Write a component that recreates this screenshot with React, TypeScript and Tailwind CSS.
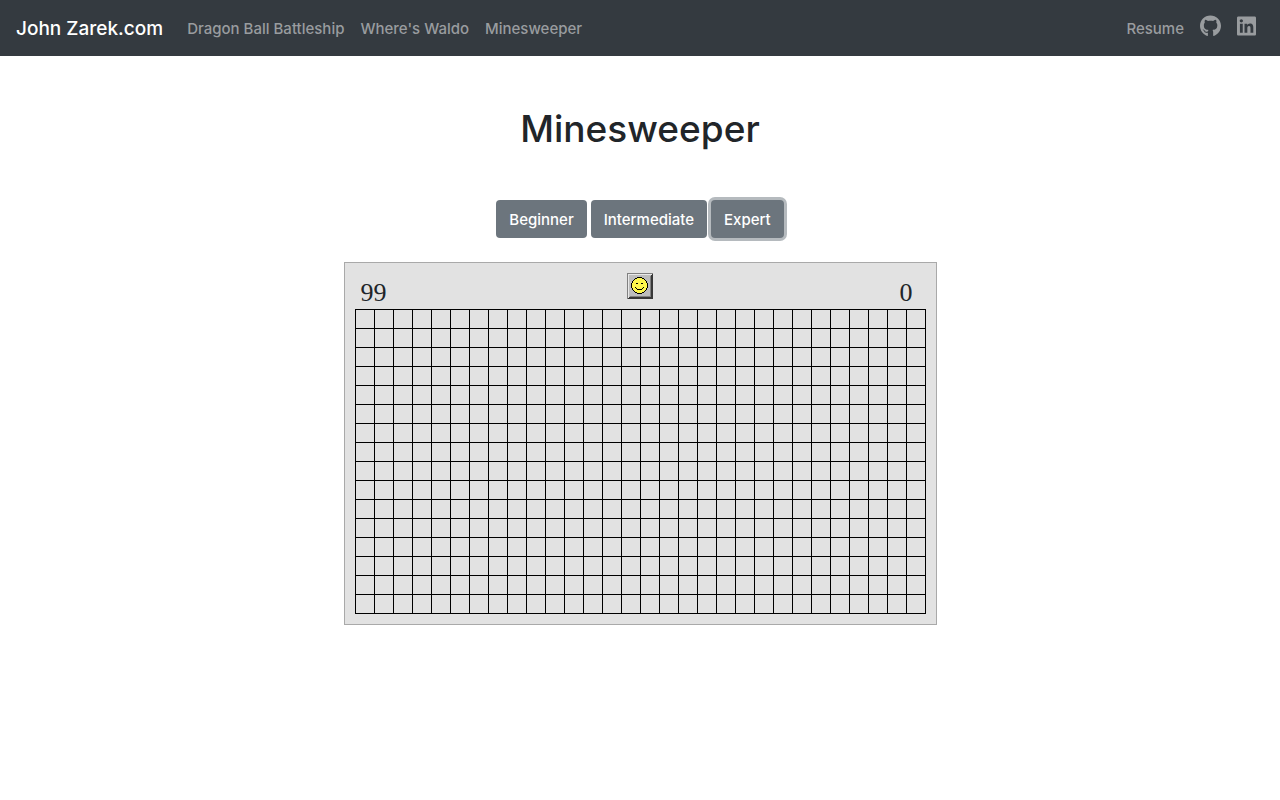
import { useEffect, useState } from "react";
import { FaGithub, FaLinkedin } from "react-icons/fa";

type Level = { name: string; columns: number; rows: number; mines: number };

const levels: Level[] = [
  { name: "Beginner", columns: 9, rows: 9, mines: 10 },
  { name: "Intermediate", columns: 16, rows: 16, mines: 40 },
  { name: "Expert", columns: 30, rows: 16, mines: 99 },
];

const games = ["Dragon Ball Battleship", "Where's Waldo", "Minesweeper"];

function Navbar() {
  return (
    <nav className="flex min-h-14 items-center bg-[#343a40] px-4 text-[15px] leading-6 font-medium text-[#999c9f]">
      <a href="#home" className="mr-4 pt-0.5 text-[19px] text-white">
        John Zarek.com
      </a>
      <ul className="flex items-center">
        {games.map((game) => (
          <li key={game}>
            <a href="#game" className="block px-2 pt-2.5 pb-2 hover:text-white">
              {game}
            </a>
          </li>
        ))}
      </ul>
      <ul className="ml-auto flex items-center">
        <li>
          <a href="#resume" className="block px-2 pt-2.5 pb-2 hover:text-white">
            Resume
          </a>
        </li>
        <li>
          <a href="#github" aria-label="GitHub" className="block px-2 pb-1 hover:text-white">
            <FaGithub className="h-[22px] w-[21px]" />
          </a>
        </li>
        <li>
          <a href="#linkedin" aria-label="LinkedIn" className="block px-2 pb-1 hover:text-white">
            <FaLinkedin className="h-[22px] w-[19px]" />
          </a>
        </li>
      </ul>
    </nav>
  );
}

function Smiley() {
  return (
    <svg viewBox="0 0 26 26" className="size-[26px]" shapeRendering="crispEdges" aria-hidden="true">
      <path fill="#808080" d="M0 0h26v26H0z" />
      <path fill="#e8e8e8" d="M1 1h24v24H1z" />
      <path fill="#383838" d="M25 1h1v25H1v-1h24zM24 2h1v23H2v-1h22z" />
      <path fill="#bdbdbd" d="M2 2h22v22H2z" />
      <path fill="#808080" d="M23 3h1v21H3v-1h20z" />
      <path
        fill="#fdf74c"
        d="M10 4h5v1h2v1h1v1h1v1h1v2h1v5h-1v2h-1v1h-1v1h-1v1h-2v1h-5v-1H8v-1H7v-1H6v-1H5v-2H4v-5h1V8h1V7h1V6h1V5h2z"
      />
      <path
        fill="#000"
        d="M10 4h5v1h-5zM8 5h2v1H8zM15 5h2v1h-2zM7 6h1v1H7zM17 6h1v1h-1zM6 7h1v1H6zM18 7h1v1h-1zM5 8h1v2H5zM19 8h1v2h-1zM4 10h1v5H4zM20 10h1v5h-1zM5 15h1v2H5zM19 15h1v2h-1zM6 17h1v1H6zM18 17h1v1h-1zM7 18h1v1H7zM17 18h1v1h-1zM8 19h2v1H8zM15 19h2v1h-2zM10 20h5v1h-5zM9 10h2v1H9zM14 10h2v1h-2zM8 14h1v1H8zM16 14h1v1h-1zM9 15h1v1H9zM15 15h1v1h-1zM10 16h5v1h-5z"
      />
    </svg>
  );
}

function Board({ level }: { level: Level }) {
  const cells = Array.from({ length: level.rows * level.columns }, (_, i) => i);
  return (
    <div className="mt-6 border border-[#a9a9a9] bg-[#e2e2e2] p-2.5">
      <div className="grid h-9 grid-cols-3 px-1.5 font-['Liberation_Serif',serif] text-[26px] leading-9 text-[#212529]">
        <span className="pt-0.5">{level.mines}</span>
        <button type="button" aria-label="New game" className="cursor-pointer self-start justify-self-center">
          <Smiley />
        </button>
        <span className="pt-0.5 pr-[7px] text-right">0</span>
      </div>
      <div
        className="grid border-t border-l border-black"
        style={{ gridTemplateColumns: `repeat(${level.columns}, 19px)` }}
      >
        {cells.map((cell) => (
          <button
            key={cell}
            type="button"
            aria-label={`Row ${Math.floor(cell / level.columns) + 1}, column ${(cell % level.columns) + 1}`}
            className="h-[19px] border-r border-b border-black"
          />
        ))}
      </div>
    </div>
  );
}

export default function App() {
  const [level, setLevel] = useState(levels[2]);

  useEffect(() => {
    document.title = "Minesweeper";
  }, []);

  return (
    <div className="min-h-screen bg-white font-['Inter',sans-serif] text-[#212529]">
      <Navbar />
      <main className="flex flex-col items-center pt-12">
        <h1 className="text-[37px] leading-[50px] font-medium">Minesweeper</h1>
        <div className="mt-[46px] flex gap-1">
          {levels.map((item) => (
            <button
              key={item.name}
              type="button"
              aria-pressed={item === level}
              onClick={() => setLevel(item)}
              className="h-[38px] rounded bg-[#6c757d] px-[13px] pt-0.5 text-[15px] font-medium text-white aria-pressed:ring-3 aria-pressed:ring-[#b5babe]"
            >
              {item.name}
            </button>
          ))}
        </div>
        <Board level={level} />
      </main>
    </div>
  );
}
